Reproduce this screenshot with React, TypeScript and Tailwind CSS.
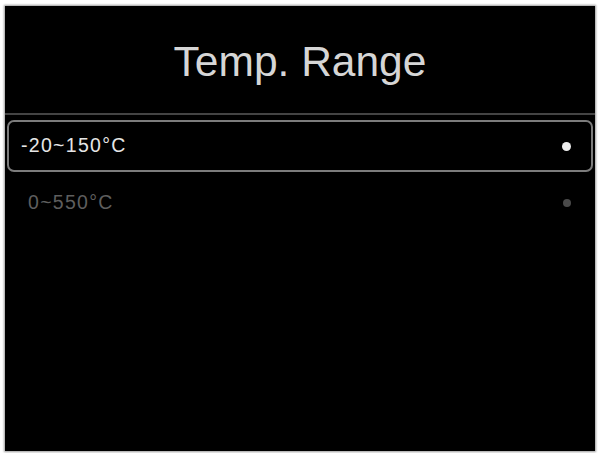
const ranges = [
  { label: "-20~150°C", selected: true },
  { label: "0~550°C", selected: false },
];

export default function App() {
  return (
    <div className="w-[601px] h-[453px] bg-white pt-[6px] pl-[5px] font-['Liberation_Sans',Arial,sans-serif]">
      <div className="w-[590px] h-[445px] bg-black flex flex-col shadow-[0_0_2px_1px_#9a9a9a]">
        <header className="h-[107px] flex items-center justify-center pt-[6px]">
          <h1 className="text-[42.5px] leading-none text-[#d6d6d6]">Temp. Range</h1>
        </header>
        <div className="h-[2px] bg-[#444444]" />
        <ul className="px-[2px] pt-[5px]">
          {ranges.map((r) =>
            r.selected ? (
              <li
                key={r.label}
                className="h-[52px] border-2 border-[#7c7c7c] rounded-[7px] flex items-center justify-between pl-[12px] pr-[20px]"
              >
                <span className="text-[19.5px] leading-none tracking-[1.3px] text-[#e6e6e6]">{r.label}</span>
                <span className="w-[9px] h-[9px] rounded-full bg-[#eeeeee]" />
              </li>
            ) : (
              <li
                key={r.label}
                className="h-[62px] flex items-center justify-between pl-[21px] pr-[22px]"
              >
                <span className="text-[19.5px] leading-none tracking-[1.3px] text-[#5e5e5e]">{r.label}</span>
                <span className="w-[8px] h-[8px] rounded-full bg-[#4a4a4a]" />
              </li>
            ),
          )}
        </ul>
      </div>
    </div>
  );
}
